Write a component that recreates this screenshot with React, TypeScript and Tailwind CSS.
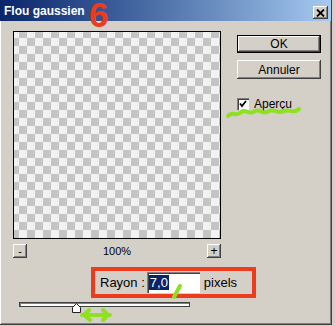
import React from 'react';

const raised = 'bg-[#d4d0c8] shadow-[inset_-1px_-1px_#404040,inset_1px_1px_#ffffff,inset_-2px_-2px_#808080]';
const sunken = 'shadow-[inset_1px_1px_#808080,inset_2px_2px_#404040,inset_-1px_-1px_#ffffff]';

const Annotations: React.FC = () => (
  <>
    <span className="absolute left-[89px] top-0 text-[35px] leading-[30px] font-bold text-[#ec3b1d] font-['Liberation_Sans',sans-serif]">
      6
    </span>
    <svg className="absolute left-0 top-0 pointer-events-none" width="335" height="326" viewBox="0 0 335 326">
      <g fill="none" stroke="#8ee021" strokeLinecap="round" strokeLinejoin="round">
        <path d="M228 116 C233 110 236 118 241 112 C246 108 249 116 255 111 C260 108 263 116 269 111 C274 108 278 115 284 111 C289 109 294 114 299 109" strokeWidth="4" />
        <path d="M174 297 L180 286" strokeWidth="4" />
        <path d="M82 315 L110 315 M84 315 L89 310 M84 315 L90 320 M108 315 L103 310 M108 315 L103 320" strokeWidth="4" />
      </g>
    </svg>
  </>
);

const App: React.FC = () => {
  return (
    <div className="relative w-[335px] h-[326px] bg-[#d4d0c8] font-['Liberation_Sans',sans-serif] text-black overflow-hidden">
      <div className="w-[332px] h-[325px] border-r border-b border-[#404040] shadow-[inset_1px_1px_#ffffff,inset_-1px_-1px_#808080] flex flex-col">
        <div className="h-[21px] flex items-center justify-between bg-linear-to-r from-[#0a246a] to-[#a6caf0] pl-[4px] pr-[3px]">
          <span className="text-white text-[12px] font-bold">Flou gaussien</span>
          <div className={`${raised} w-[15px] h-[13px] flex items-center justify-center mt-[4px]`}>
            <svg width="9" height="8" viewBox="0 0 9 8">
              <path d="M1 0.5 L8 7.5 M8 0.5 L1 7.5" stroke="black" strokeWidth="1.8" />
            </svg>
          </div>
        </div>
        <div className="flex">
          <div className="ml-[13px] mt-[10px] w-[208px] flex flex-col">
            <div className="w-[208px] h-[208px] border border-black bg-[conic-gradient(#c4c4c4_25%,#f2f2f2_0_50%,#c4c4c4_0_75%,#f2f2f2_0)] bg-size-[16px_16px] bg-position-[-3px_-2px]" />
            <div className="mt-[5px] h-[14px] flex items-center justify-between">
              <div className={`${raised} w-[14px] h-[14px] flex items-center justify-center text-[11px] leading-none`}>-</div>
              <span className="text-[11px]">100%</span>
              <div className={`${raised} w-[14px] h-[14px] flex items-center justify-center text-[12px] leading-none`}>+</div>
            </div>
            <div className="mt-[9px] ml-[78px] w-[165px] h-[31px] border-4 border-[#ec3b1d] flex items-center">
              <span className="ml-[5px] text-[13px]">Rayon :</span>
              <div className={`ml-[2px] w-[53px] h-[21px] bg-white ${sunken} flex items-center pl-[2px]`}>
                <span className="bg-[#0a246a] text-white text-[13px] leading-[15px] px-[1px]">7,0</span>
              </div>
              <span className="ml-[4px] text-[13px]">pixels</span>
            </div>
            <div className="relative mt-[4px] ml-[6px] w-[171px] h-[5px] bg-white border border-[#404040] shadow-[inset_1px_1px_#808080]">
              <svg className="absolute left-[52px] top-[0px]" width="9" height="10" viewBox="0 0 9 10">
                <path d="M0.5 9.5 L0.5 4.5 L4.5 0.5 L8.5 4.5 L8.5 9.5 Z" fill="#ffffff" stroke="#202020" />
              </svg>
            </div>
          </div>
          <div className="ml-[16px] mt-[14px] w-[84px] flex flex-col">
            <button className={`h-[18px] w-[84px] border border-black ${raised} text-[12px] leading-none`}>OK</button>
            <button className={`mt-[7px] h-[19px] w-[84px] ${raised} text-[12px] leading-none`}>Annuler</button>
            <label className="mt-[16px] flex items-center gap-[5px] text-[12px]">
              <span className={`w-[12px] h-[12px] bg-white ${sunken} flex items-center justify-center`}>
                <svg width="8" height="8" viewBox="0 0 8 8">
                  <path d="M1 3.5 L3 6 L7 1" fill="none" stroke="black" strokeWidth="1.8" />
                </svg>
              </span>
              Aperçu
            </label>
          </div>
        </div>
      </div>
      <Annotations />
    </div>
  );
};

export default App;
